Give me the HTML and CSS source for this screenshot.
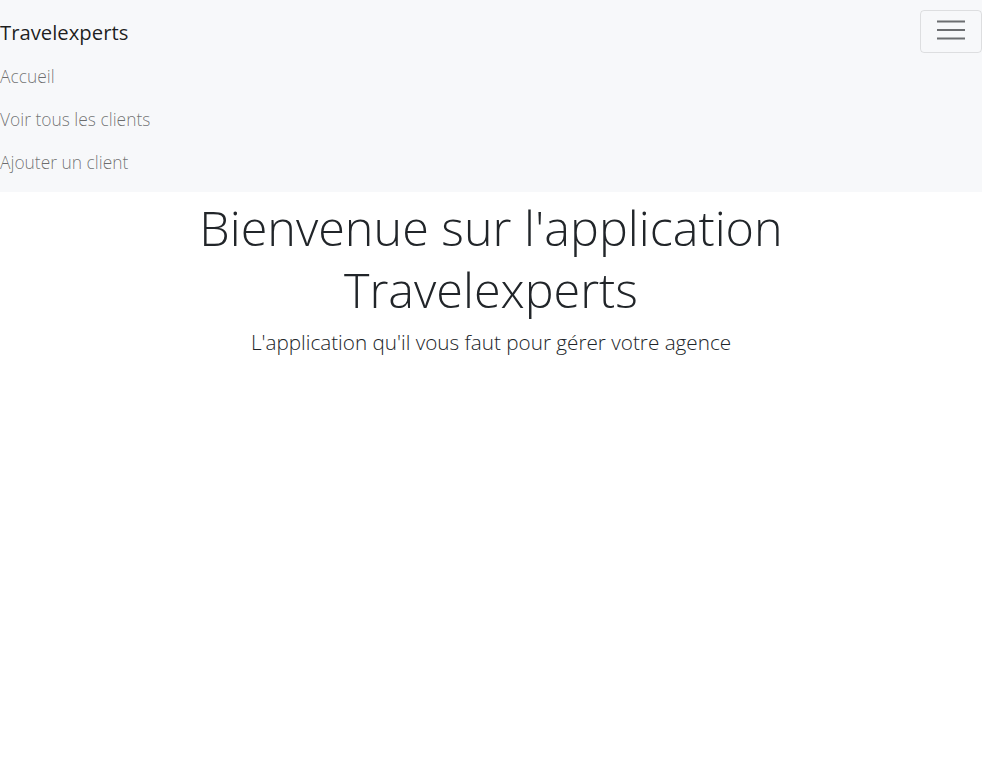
FILE: index.html
```html
<!DOCTYPE html>
<html lang="fr">
<head>
<meta charset="utf-8">
<title>Travelexperts</title>
<link rel="stylesheet" href="styles.css">
</head>
<body>
<nav class="navbar">
  <div class="navbar-top">
    <a class="brand" href="#">Travelexperts</a>
    <button class="toggler" type="button" aria-label="Menu">
      <svg class="toggler-icon" width="28" height="20" viewBox="0 0 28 20" aria-hidden="true">
        <path d="M0 1.5h28M0 10h28M0 18.5h28" stroke="#6c6e71" stroke-width="2.2" fill="none"/>
      </svg>
    </button>
  </div>
  <ul class="nav">
    <li><a class="nav-link" href="#">Accueil</a></li>
    <li><a class="nav-link" href="#">Voir tous les clients</a></li>
    <li><a class="nav-link" href="#">Ajouter un client</a></li>
  </ul>
</nav>
<main class="hero">
  <h1 class="display">Bienvenue sur l'application Travelexperts</h1>
  <p class="lead">L'application qu'il vous faut pour gérer votre agence</p>
</main>
</body>
</html>
```
FILE: styles.css
```css
* { box-sizing: border-box; }
html, body { margin: 0; padding: 0; }
body {
  font-family: "Open Sans", "Noto Sans", sans-serif;
  font-weight: 300;
  color: #212529;
  background: #fff;
}
.navbar {
  background: #f7f8fa;
  padding: 8px 0 8px 0;
  height: 192px;
}
.navbar-top {
  display: flex;
  justify-content: space-between;
  align-items: center;
  height: 46px;
}
.brand {
  font-size: 20.3px;
  font-weight: 400;
  color: rgba(0,0,0,0.88);
  text-decoration: none;
  margin-top: 1px;
}
.toggler {
  width: 62px;
  height: 43px;
  border: 1px solid rgba(0,0,0,0.1);
  border-radius: 4px;
  background: transparent;
  display: flex;
  align-items: center;
  justify-content: center;
  padding: 0;
  margin-top: 1px;
}
.toggler-icon {
  margin-top: -3px;
}
.nav {
  list-style: none;
  margin: 0;
  padding: 1px 0 0;
}
.nav-link {
  display: block;
  font-size: 17.4px;
  line-height: 27px;
  padding: 8px 0;
  color: rgba(0,0,0,0.56);
  text-decoration: none;
}
.hero {
  text-align: center;
  padding-top: 4px;
}
.display {
  font-size: 48.5px;
  font-weight: 300;
  line-height: 62px;
  margin: 0 auto;
  width: 640px;
}
.lead {
  font-size: 20.7px;
  font-weight: 300;
  line-height: 28px;
  margin: 8px 0 0;
}
```
